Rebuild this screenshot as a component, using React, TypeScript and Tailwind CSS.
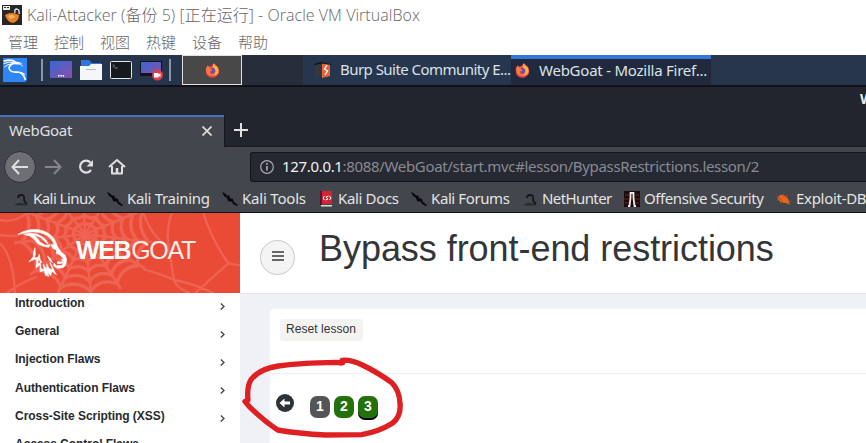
import React from "react";

const ui = "font-['Noto_Sans',sans-serif]";

const webAngles = [8, 33, 60, 85, 112, 140, 172, 203, 235, 268, 300, 335];
const webRadii = [34, 58, 84, 112, 142, 172];

function ringPath(r: number) {
  const cx = 255;
  const cy = 72;
  const at = (deg: number, rad: number) => {
    const t = (deg * Math.PI) / 180;
    return `${(cx + Math.cos(t) * rad * 1.12).toFixed(1)} ${(cy + Math.sin(t) * rad).toFixed(1)}`;
  };
  let d = `M${at(webAngles[0], r)}`;
  webAngles.forEach((a, i) => {
    const next = i + 1 < webAngles.length ? webAngles[i + 1] : webAngles[0] + 360;
    d += ` Q${at((a + next) / 2, r * 0.8)} ${at(next, r)}`;
  });
  return d;
}

function Web() {
  return (
    <svg className="absolute inset-0 h-20 w-60" viewBox="0 9 720 240" fill="none" stroke="#ee6352">
      {webRadii.map((r) => (
        <path key={r} d={ringPath(r)} strokeWidth="10" />
      ))}
      {webAngles.map((a) => {
        const t = (a * Math.PI) / 180;
        return (
          <line key={a} x1="255" y1="72" x2={255 + Math.cos(t) * 215} y2={72 + Math.sin(t) * 190} strokeWidth="8" />
        );
      })}
      <path
        strokeWidth="7"
        d="M515 9Q498 60 506 110T522 210Q530 235 570 249M610 9Q635 90 685 160L720 166M685 160Q640 200 585 249M430 178Q480 190 522 210Q580 220 640 249M430 9Q455 80 505 110M0 75Q50 85 100 60M0 100Q40 140 45 249M0 30Q45 40 80 9M20 249Q60 220 110 200"
      />
    </svg>
  );
}

function Goat() {
  return (
    <svg className="absolute left-[14px] top-[9px] h-[60px] w-[60px]" viewBox="0 0 180 180">
      <g fill="#fff" stroke="#fff" strokeWidth="1.800" strokeLinejoin="round">
        <path d="M12 37Q38 20 72 23Q104 27 120 50Q130 64 130 78L122 73Q116 51 98 40Q73 26 42 31Q28 34 12 37Z" />
        <path d="M29 37Q61 29 83 43Q98 53 102 65L95 61Q82 44 59 39Q72 49 78 60L94 69L109 68L104 76L87 73L71 65Q61 49 47 42Z" />
        <path d="M111 68L128 69L135 82L128 85L116 79ZM131 75L142 91L153 99L158 111L155 130L147 137L130 139L119 132L120 123L127 131L144 130L150 120L147 108L136 98L126 94Z" />
        <path d="M142 112L153 114L146 119ZM130 119L149 120L146 124L130 125Z" />
        <path d="M63 77Q55 94 59 103L45 119L62 112L68 114L66 137L78 129L78 149L91 146L94 160L104 163L101 151L110 161L113 148L127 158L118 140L108 121L115 144L105 139L98 125L99 142L88 127L90 145L80 137L80 121L72 126L74 106L60 108L64 98Z" />
        <path d="M100 102L108 108L116 122L108 117ZM76 96L78 111L84 122L78 119L72 106Z" />
      </g>
    </svg>
  );
}

function Firefox() {
  return (
    <svg className="h-[15px] w-[15px] shrink-0" viewBox="0 0 16 16">
      <path fill="#e8414f" d="M1 5L3 2L4 4L7 3Q9 0 11 1Q12 3 14 4Q16 8 15 11Q12 16 7.500 15.700Q2 15 1 10Q.5 7 1 5Z" />
      <path fill="#ffb13b" d="M9 0Q10 3 13 4Q16 9 13 12Q9 15 6 12Q11 13 11 9Q11 6 8 5Z" />
      <path fill="#f97940" d="M1 6L3 3L5 5L8 5Q6 7 8 8Q7 10 5 9Q6 13 10 13Q5 15 2 11Z" />
      <path fill="#6b4fa8" d="M6 6Q8 4 10.500 6.500Q12 10 9 11Q6 11.500 5.500 9L8 8Z" />
    </svg>
  );
}

function KaliLogo() {
  return (
    <svg className="h-6 w-6 shrink-0" viewBox="0 0 72 72">
      <path fill="#2f86f6" d="M0 0H72V66L66 72H0Z" />
      <g fill="none" stroke="#fff" strokeWidth="4">
        <path d="M2 10Q24 2 39 13L48 17L33 16Q15 23 19 33Q24 44 42 42Q62 43 67 66" strokeWidth="5" />
        <path d="M2 17Q20 8 36 15M4 27Q14 18 28 17M40 15L52 19L59 24M45 13L56 17M46 42Q58 42 67 50" strokeWidth="3" />
      </g>
    </svg>
  );
}

function Desktop({ rec = false }: { rec?: boolean }) {
  return (
    <svg className="h-[22px] w-6 shrink-0" viewBox="0 0 24 22">
      <defs>
        <linearGradient id="desk" x1="0" y1="0" x2="1" y2="1">
          <stop offset="0" stopColor="#3569cf" />
          <stop offset="1" stopColor="#8b4fae" />
        </linearGradient>
      </defs>
      {rec ? (
        <>
          <path fill="#10131f" d="M0 2H22V17H0Z" />
          <path fill="url(#desk)" d="M1 3H21V14H1Z" />
          <circle cx="17.500" cy="16" r="5.500" fill="#e13c45" />
          <path fill="#fff" d="M14 14H18.500V15.500L20.500 14V18L18.500 17V18.500H14Z" />
        </>
      ) : (
        <>
          <path fill="url(#desk)" d="M0 2H22V19H0Z" />
          <path fill="#fff" d="M8 16H9.500V17.500H8ZM10.300 16H11.800V17.500H10.300ZM12.600 16H14.100V17.500H12.600Z" />
        </>
      )}
    </svg>
  );
}

function MarkIcon({ kind }: { kind: string }) {
  if (kind === "docs")
    return (
      <svg className="h-4 w-[14px]" viewBox="0 0 14 16">
        <path fill="#d42332" d="M1 0H13V13H1Z" />
        <path fill="#55152e" d="M1 0H3V14H1Z" />
        <path fill="#e7d9d9" d="M2 14H13V15.500H2Z" />
        <path fill="none" stroke="#fff" strokeWidth="1" d="M5.500 5L4 7L5.500 9M10.500 5L12 7L10.500 9M9.500 5L7 6L9 8L6.500 9" />
      </svg>
    );
  if (kind === "offsec")
    return (
      <svg className="h-4 w-4" viewBox="0 0 16 16">
        <path fill="#1b0c10" d="M0 0H16V16H0Z" />
        <path stroke="#6b2229" d="M1 4H5M0 8H5M1 12H5M11 4H15M11 8H16M11 12H15" />
        <path fill="none" stroke="#f1e9e8" strokeWidth="1.800" d="M4 15H5.500L6.500 7V2H9.500V7L10.500 15H12" />
      </svg>
    );
  if (kind === "exploit")
    return (
      <svg className="h-4 w-4" viewBox="0 0 16 16">
        <path fill="#e5681d" d="M2 6Q5 2 9 5Q13 7 13 12L14 14L10 12Q4 12 2 8Z" />
        <path stroke="#c2551c" d="M1 6L5 7M1 9L6 8M4 12L7 9M7 3V6M11 4L9 7M12 12L15 10" />
      </svg>
    );
  if (kind === "dragon")
    return (
      <svg className="h-4 w-4" viewBox="0 0 16 16">
        <path fill="none" stroke="#15171c" strokeWidth="1.800" d="M4 7Q4 4 7 4Q11 4 10 8Q10 11 13 13" />
        <path fill="#272b32" d="M1 14Q4 11 7 12L13 13V14.500H1Z" />
      </svg>
    );
  return (
    <svg className="h-4 w-4" viewBox="0 0 16 16">
      <path fill="#08090b" d="M0 1L4 3L5 5L7 4L8 7L11 8L12 11L16 14L15 15L11 13L10 11L6 10L5 7L2 5Z" />
    </svg>
  );
}

function Mark({ kind, label, box, text }: { kind: string; label: string; box: string; text: string }) {
  return (
    <div className={`flex shrink-0 items-center ${box}`}>
      <div className="flex w-[19px] shrink-0">
        <MarkIcon kind={kind} />
      </div>
      <span className={`whitespace-nowrap ${text}`}>{label}</span>
    </div>
  );
}

const lessons = [
  "Introduction",
  "General",
  "Injection Flaws",
  "Authentication Flaws",
  "Cross-Site Scripting (XSS)",
  "Access Control Flaws",
];

export default function App() {
  return (
    <div className="relative flex h-[443px] w-[866px] flex-col overflow-hidden bg-white">
      <header className="flex h-[55px] shrink-0 flex-col bg-white font-['Open_Sans','Noto_Sans_CJK_SC',sans-serif] font-light text-[#666]">
        <div className="flex h-[29px] items-center pl-[2px]">
          <svg className="h-5 w-5 shrink-0" viewBox="0 0 20 20">
            <path fill="#292625" d="M0 0H20V20H0Z" />
            <path fill="#e9e9e9" d="M1 1H8V5H1Z" />
            <path stroke="#333" d="M2 2.500H4M5 2.500H7" />
            <path fill="#e8812a" d="M3 10Q9 6 17 10Q17 16 11 18Q5 17 3 10Z" />
            <path fill="#f7b660" d="M6 11Q11 8 13 12L8 14Z" />
            <path fill="none" stroke="#eee" strokeWidth="1.300" d="M13 8Q12 4 15 4Q18 5 17 9" />
          </svg>
          <span className="ml-[5px] whitespace-nowrap text-base tracking-[0.040px]">Kali-Attacker (备份 5) [正在运行] - Oracle VM VirtualBox</span>
        </div>
        <nav className="flex h-[26px] items-center gap-4 pl-2 text-[15px]">
          {["管理", "控制", "视图", "热键", "设备", "帮助"].map((m) => (
            <span key={m} className="w-[30px] whitespace-nowrap">{m}</span>
          ))}
        </nav>
      </header>

      <div className={`flex h-8 shrink-0 border-b-2 border-[#101218] bg-[#27354c] ${ui} text-[15px] text-[#dfe2e6]`}>
        <div className="flex w-[182px] items-center pl-[3px]">
          <KaliLogo />
          <div className="ml-[14px] h-[22px] w-[2px] bg-[#8c95a5]" />
          <div className="ml-[7px] flex items-center gap-[6px]">
            <Desktop />
            <svg className="h-[22px] w-6 shrink-0" viewBox="0 0 24 22">
              <path fill="#2e76df" d="M1 1H9L12 4H21V12H1Z" />
              <path fill="#f5f6f8" d="M0 7H9L11 5H22V21H0Z" />
              <path stroke="#b6bac0" d="M6 10.500H16" />
            </svg>
            <svg className="h-[22px] w-6 shrink-0" viewBox="0 0 24 22">
              <rect x=".5" y="2.500" width="21" height="17" rx="1" fill="#171a1c" stroke="#e5e5e5" />
              <path fill="none" stroke="#bbb" strokeWidth=".8" d="M3 5.500L4.500 7L3 8.500M5 9H7.500" />
            </svg>
            <Desktop rec />
          </div>
          <div className="ml-[5px] h-[22px] w-[2px] bg-[#8c95a5]" />
        </div>
        <div className="flex h-[30px] w-[60px] items-center justify-center border border-[#e2e2e2] bg-[#484848]"><Firefox /></div>
        <div className="w-[61px] bg-[#272d3a]" />
        <div className="flex w-[208px] shrink-0 items-center bg-[#26364f] pl-[11px]">
          <svg className="h-4 w-[17px] shrink-0" viewBox="0 0 17 16">
            <path fill="#36383d" d="M1 2H8V15H1Z" />
            <path fill="#e96539" d="M8 1L16 2V14L8 16Z" />
            <path fill="#101215" d="M0 2L7 0L17 2V3L8 1.500L0 3Z" />
            <path fill="none" stroke="#fff" strokeWidth="1.300" d="M13 3L10.500 7L13.500 9L11 13" />
          </svg>
          <span className="ml-[9px] whitespace-nowrap pb-[2px] text-[15px] tracking-[-0.540px]">Burp Suite Community E...</span>
        </div>
        <div className="flex w-[200px] shrink-0 items-center border-t-4 border-[#3576dc] bg-[#202a3c] pb-[4px] pl-[4px]">
          <Firefox />
          <span className="ml-[9px] whitespace-nowrap text-[15px] tracking-[-0.240px]">WebGoat - Mozilla Firef...</span>
        </div>
      </div>

      <div className={`flex h-7 shrink-0 justify-end overflow-hidden bg-[#22252d] pt-[2px] ${ui} text-sm font-bold text-[#eee]`}>
        <span className="w-[6px] whitespace-nowrap">W</span>
      </div>

      <div className={`flex h-8 shrink-0 bg-[#22252d] ${ui} text-[15px] text-[#dfe0e2]`}>
        <div className="flex w-[224px] items-center justify-between border-t-2 border-[#456fc1] bg-[#43464c] pl-[9px] pr-3">
          <span className="pb-[3px] tracking-[-0.300px]">WebGoat</span>
          <svg className="mb-[2px] h-[10px] w-[10px]" viewBox="0 0 10 10"><path stroke="#dcdddd" strokeWidth="1.700" d="M.5 .5L9.500 9.500M9.500 .5L.5 9.500" /></svg>
        </div>
        <div className="flex flex-1 items-center border-b border-l border-[#17191f] pb-px pl-[9px]">
          <svg className="h-[14px] w-[14px]" viewBox="0 0 14 14"><path stroke="#e0e1e2" strokeWidth="2" d="M7 0V14M0 7H14" /></svg>
        </div>
      </div>

      <div className={`flex h-[37px] shrink-0 items-center bg-[#43464c] pl-1 ${ui} text-[15px]`}>
        <svg className="mt-[2px] h-8 w-[123px] shrink-0" viewBox="0 0 123 32" fill="none" stroke="#dedfe0" strokeWidth="2">
          <circle cx="16" cy="16" r="15.500" fill="#6d6f75" stroke="#2d3036" strokeWidth="1" />
          <path d="M24 16H9M15 9L8.500 16L15 23" />
          <path stroke="#84868b" d="M41 16H56M50 9L56.500 16L50 23" />
          <path d="M86.500 11.500A6 6 0 1 0 87 19" strokeWidth="2.200" />
          <path fill="#dedfe0" stroke="none" d="M89 9V15.500H82.500Z" />
          <path d="M105 16L113 9L121 16M108 15V22.500H118V15" strokeLinejoin="round" />
          <path d="M113 23V17" strokeWidth="2.500" />
        </svg>
        <div className="ml-[123px] mt-[2px] flex h-[30px] flex-1 items-center rounded-l-[3px] border border-r-0 border-[#121419] bg-[#262832] pl-[9px]">
          <svg className="h-[14px] w-[14px]" viewBox="0 0 14 14" fill="none" stroke="#aaabb0" strokeWidth="1.200">
            <circle cx="7" cy="7" r="6.300" /><path strokeWidth="1.700" d="M7 6V10.500M7 3V4.700" />
          </svg>
          <span className="ml-2 whitespace-nowrap tracking-[-0.330px] text-[#898b93]"><span className="text-[#f1f2f2]">127.0.0.1</span>:8088/WebGoat/start.mvc#lesson/BypassRestrictions.lesson/2</span>
        </div>
      </div>

      <div className={`flex h-[29px] shrink-0 items-center overflow-hidden border-b border-[#101216] bg-[#43464c] pl-[14px] pt-px ${ui} text-[15px] text-[#e4e5e5]`}>
        <Mark kind="dragon" label="Kali Linux" box="w-[93px]" text="tracking-[-0.550px]" />
        <Mark kind="kali" label="Kali Training" box="w-[115px]" text="tracking-[-0.320px] ml-[1px]" />
        <Mark kind="kali" label="Kali Tools" box="w-[97px]" text="tracking-[-0.200px] ml-[1px]" />
        <Mark kind="docs" label="Kali Docs" box="w-[92px]" text="tracking-[-0.350px]" />
        <Mark kind="kali" label="Kali Forums" box="w-[112px]" text="tracking-[-0.400px] ml-[1px]" />
        <Mark kind="dragon" label="NetHunter" box="w-[101px]" text="tracking-[-0.600px]" />
        <Mark kind="offsec" label="Offensive Security" box="w-[152px]" text="tracking-[-0.420px] ml-[1px]" />
        <Mark kind="exploit" label="Exploit-DB" box="w-[100px]" text="tracking-[-0.300px] ml-[1px]" />
      </div>

      <div className="flex min-h-0 flex-1 font-['Liberation_Sans',Arial,sans-serif]">
        <aside className="flex w-60 shrink-0 flex-col bg-white">
          <div className="relative h-20 shrink-0 overflow-hidden bg-[#e94b36] text-white">
            <Web />
            <Goat />
            <div className="relative pl-[76px] pt-[19px] text-[25px] leading-9 tracking-[-1.400px] whitespace-nowrap"><b>WEB</b><span className="ml-px tracking-[-1.300px] text-white/90">GOAT</span></div>
          </div>
          <nav className="flex flex-col overflow-hidden pl-[15px] pr-[15px] text-xs font-bold text-[#262a2d]">
            {lessons.map((l) => (
              <div key={l} className="flex h-[28.200px] shrink-0 items-start justify-between">
                <span className="leading-5 tracking-[-0.040px]">{l}</span>
                <svg className="mt-[9.500px] h-[7px] w-[5px]" viewBox="0 0 5 7"><path fill="none" stroke="#444" strokeWidth="1.300" d="M.8 .5L4 3.500L.8 6.500" /></svg>
              </div>
            ))}
          </nav>
        </aside>
        <main className="flex min-w-0 flex-1 flex-col bg-[#f0f1f6]">
          <div className="flex h-[81px] shrink-0 border-b border-[#e4e5e9] bg-white pl-5">
            <div className="mt-[27px] flex h-[35px] w-[35px] items-center justify-center rounded-full border border-[#c8c8c8] bg-[#f4f4f4]">
              <svg className="-mt-[3px] ml-px h-[10px] w-3" viewBox="0 0 12 10"><path stroke="#686868" strokeWidth="2" d="M0 1H12M0 5H12M0 9H12" /></svg>
            </div>
            <h1 className="ml-6 mt-4 whitespace-nowrap text-[36px] leading-[40px] tracking-[-0.050px] text-[#333638]">Bypass front-end restrictions</h1>
          </div>
          <section className="ml-[30px] mt-[15px] flex flex-1 flex-col rounded-tl-[4px] bg-white">
            <div className="flex h-[65px] shrink-0 border-b border-[#f0f0f1] pl-[10px] pt-[10px]">
              <button className="h-[22px] w-[83px] whitespace-nowrap rounded-[3px] bg-[#f5f3f2] pb-[2px] pr-[1px] text-xs leading-5 tracking-[0.060px] text-[#333]">Reset lesson</button>
            </div>
            <div className="flex pl-[6px] pt-[20px]">
              <svg className="h-[18px] w-[18px]" viewBox="0 0 18 18"><circle cx="9" cy="9" r="9" fill="#2d3237" /><path fill="#fff" d="M3.500 9L8.500 4.500V7.500H14V10.500H8.500V13.500Z" /></svg>
              <div className="ml-4 mt-[2px] flex gap-1 text-center text-sm font-bold leading-[21px] text-white">
                <span className="h-[22px] w-5 rounded-[7px] bg-[#555]">1</span>
                <span className="h-[22px] w-5 rounded-[7px] bg-[#24700b]">2</span>
                <span className="h-[22px] w-5 rounded-[7px] bg-[#24700b] shadow-[0_2px_0_#000]">3</span>
              </div>
            </div>
          </section>
        </main>
      </div>

      <svg className="pointer-events-none absolute left-[235px] top-[340px] h-[103px] w-[210px]" viewBox="0 0 630 309">
        <path fill="none" stroke="#de2023" strokeWidth="16" strokeLinecap="round" strokeLinejoin="round" d="M320 69L305 67Q190 69 130 78Q70 88 48 119Q35 139 39 180L30 184L43 200Q86 242 128 270Q190 281 272 285L380 284Q430 276 472 250Q499 229 495 190Q493 150 470 128Q430 98 382 75Q345 58 321 61L323 68" />
      </svg>
    </div>
  );
}
